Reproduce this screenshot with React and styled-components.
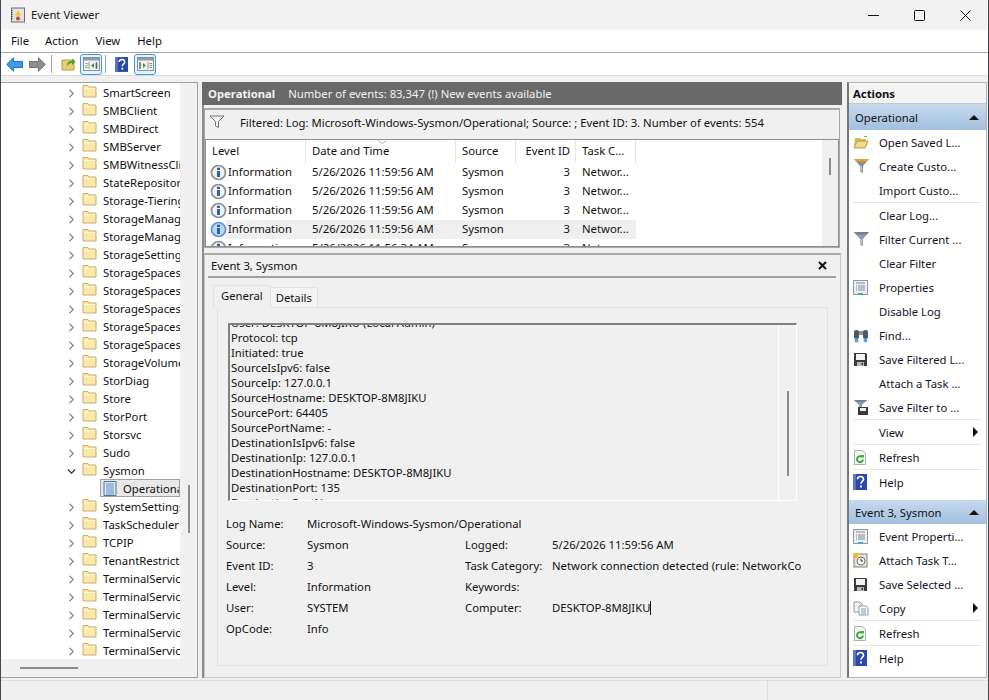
import React from "react";
import styled, { createGlobalStyle } from "styled-components";

const Global = createGlobalStyle`
  html, body { margin: 0; padding: 0; background: #f0f0f0; overflow: hidden; }
  * { box-sizing: border-box; }
  body { font-family: "Noto Sans", "Open Sans", "Liberation Sans", sans-serif; font-size: 11.3px; color: #111; }
  svg { flex: none; display: block; }
`;

const Win = styled.div`
  width: 989px; height: 700px; display: flex; flex-direction: column;
  border-left: 1px solid #3c4a55; border-right: 1px solid #3c4a55; background: #f0f0f0; overflow: hidden;
`;
const TitleBar = styled.div`height: 30px; background: #f2f2f2; display: flex; align-items: center; padding-left: 9px; flex: none;`;
const TitleText = styled.span`flex: 1; color: #1a1a1a; margin-left: 5px; padding-bottom: 2px;`;
const WinBtn = styled.div`width: 46px; height: 30px; display: flex; align-items: center; justify-content: center;`;
const MenuBar = styled.div`height: 23px; background: #fff; border-bottom: 1px solid #a6a6a6; display: flex; align-items: center; padding: 0 0 2px 10px; flex: none;`;
const MenuItem = styled.span`margin-right: ${p => p.$mr}px;`;
const ToolBar = styled.div`height: 23px; background: #fff; border-bottom: 1px solid #dcdcdc; display: flex; align-items: center; padding-left: 5px; flex: none;`;
const ToolBtn = styled.div`width: ${p => p.$w || 23}px; height: 21px; display: flex; align-items: center; justify-content: center; margin-left: ${p => p.$ml || 0}px;
  ${p => p.$on && "background:#e5f3ff;border:1px solid #3f9be3;border-radius:3px;"}`;
const ToolSep = styled.div`width: 1px; height: 18px; background: #a0a0a0; margin: 0 ${p => p.$r}px 0 ${p => p.$l}px;`;
const Main = styled.div`flex: 1; display: grid; grid-template-columns: 197px 643px 140px; column-gap: 3px; padding: 6px 0 2px 0; min-height: 0;`;

const TreePane = styled.div`display: grid; grid-template-rows: 1fr 18px; grid-template-columns: 1fr 17px; border: 1px solid #a0a0a0; border-left: 0; background: #f0f0f0; min-height: 0; overflow: hidden;`;
const TreeList = styled.div`background: #fff; overflow: hidden; min-height: 0;`;
const TreeRow = styled.div`height: 18px; display: flex; align-items: center; white-space: nowrap; overflow: hidden; padding-left: ${p => p.$leaf ? 99 : 66}px;`;
const TreeLabel = styled.span`margin-left: 6px; overflow: hidden; flex: 1;`;
const LeafBox = styled.div`display: flex; align-items: center; height: 18px; background: #e8e8e8; border: 1px solid #a0a0a0; flex: 1; overflow: hidden; padding-left: 2px; gap: 6px; color: #111;`;
const VTrack = styled.div`display: flex; flex-direction: column; align-items: center; padding-top: ${p => p.$top}px; background: #f0f0f0;`;
const VThumb = styled.div`width: 2px; height: ${p => p.$h}px; background: #8c8c8c; flex: none;`;
const HTrack = styled.div`background: #f0f0f0; grid-column: 1 / 3; padding: 8px 0 0 19px;`;
const HThumb = styled.div`width: 58px; height: 2px; background: #8c8c8c;`;

const Center = styled.div`display: flex; flex-direction: column; min-height: 0; margin-left: 1px;`;
const DarkHead = styled.div`height: 23px; background: #696969; color: #f2f2f2; display: flex; align-items: center; padding: 0 0 1px 6px; gap: 13px; flex: none; margin-right: 2px;`;
const Bold = styled.b`font-weight: 700;`;
const PaneStack = styled.div`flex: 1; border-left: 2px solid #8c8c8c; display: flex; flex-direction: column; min-height: 0;`;
const UpperPane = styled.div`height: 140px; margin-top: 3px; margin-right: 4px; border: 1px solid #a8a8a8; border-top-width: 2px; background: #f0f0f0; flex: none; display: flex; flex-direction: column;`;
const FilterBar = styled.div`height: 29px; display: flex; align-items: center; padding: 0 0 5px 4px; gap: 15px; flex: none;`;
const Grid = styled.div`flex: 1; background: #fff; border: 1px solid #8f8f8f; display: grid; grid-template-columns: 1fr 16px; overflow: hidden; min-height: 0;`;
const GridBody = styled.div`overflow: hidden;`;
const Row = styled.div`display: grid; grid-template-columns: 100px 150px 60px 60px 60px; height: ${p => p.$h || 19}px; align-items: center; position: relative; width: 430px;`;
const HeadCell = styled.div`height: 23px; display: flex; align-items: center; padding: 0 0 3px 6px; border-right: 1px solid #e6e6e6; ${p => p.$r && "justify-content:flex-end;padding-right:5px;padding-left:0;"}`;
const SortMark = styled.svg`position: absolute; left: 172px; top: 0;`;
const Cell = styled.div`padding-left: 6px; white-space: nowrap; height: 19px; line-height: 18px; overflow: hidden;
  ${p => p.$r && "text-align:right;padding-right:6px;padding-left:0;"}
  ${p => p.$sel && "background:#efefef;"}
  ${p => p.$lvl && "padding-left:2px;margin-left:20px;"}`;
const IconSlot = styled.div`position: absolute; left: 4px; top: 1px; width: 17px; height: 17px;`;

const Lower = styled.div`flex: 1; margin-top: 5px; margin-right: 3px; border: 1px solid #c8c8c8; border-top: 2px solid #a8a8a8; padding: 0 4px 0 3px; display: flex; flex-direction: column; min-height: 0;`;
const LowerHead = styled.div`height: 23px; border-bottom: 2px solid #a0a0a0; display: flex; align-items: center; justify-content: space-between; padding: 0 9px 0 3px; flex: none;`;
const Tabs = styled.div`display: flex; align-items: flex-end; height: 29px; padding-left: 5px; flex: none;`;
const Tab = styled.div`height: ${p => p.$on ? 23 : 20}px; padding: 0 ${p => p.$on ? 7 : 5}px ${p => p.$on ? 4 : 0}px; display: flex; align-items: center; background: ${p => p.$on ? "#f0f0f0" : "#f4f4f4"}; border: 1px solid #e2e2e2; border-bottom: 0;
  ${p => p.$on ? "position:relative;margin-bottom:-1px;" : "margin-left:-1px;"}`;
const TabBody = styled.div`flex: 1; margin: 0 8px 11px 9px; border: 1px solid #e2e2e2; padding: 15px 0 0 10px; display: flex; flex-direction: column; min-height: 0;`;
const XmlBox = styled.div`height: 178px; width: 569px; border-style: solid; border-width: 2px 1px 1px 2px; border-color: #808080 #fff #fff #808080; display: grid; grid-template-columns: 1fr 18px; overflow: hidden; flex: none;`;
const XmlText = styled.div`overflow: hidden; padding-left: 1px; line-height: 15px; margin-top: -10px; white-space: nowrap;`;
const XmlTrack = styled.div`border-left: 1px solid #fff; display: flex; justify-content: center; padding-top: 66px;`;
const Details = styled.div`display: grid; grid-template-columns: 81px 158px 87px 1fr; grid-auto-rows: 21px; margin: 12px 0 0 -2px; align-items: center; white-space: nowrap;`;
const WideCell = styled.span`grid-column: 2 / 5;`;
const Caret = styled.span`display: inline-block; width: 1px; height: 14px; background: #111; vertical-align: middle;`;

const Actions = styled.div`display: flex; flex-direction: column; border: 1px solid #b4b4b4; border-left: 2px solid #777; background: #fff; min-height: 0; overflow: hidden;`;
const ActionsHead = styled.div`height: 21px; background: #f4f4f4; border-bottom: 1px solid #c8c8c8; font-weight: 700; display: flex; align-items: center; padding-left: 4px; flex: none;`;
const SecHead = styled.div`height: ${p => p.$h}px; background: linear-gradient(#c6daef, #a2bfde); display: flex; align-items: center; justify-content: space-between; padding: 0 7px 0 6px; flex: none;`;
const Item = styled.div`height: 24px; display: flex; align-items: center; padding: 0 8px 0 4px; gap: 8px; white-space: nowrap; flex: none; color: #14142a;`;
const ItemIcon = styled.div`width: 18px; height: 18px; display: flex; align-items: center; justify-content: flex-start; flex: none;`;
const ItemText = styled.span`flex: 1;`;
const ItemSep = styled.div`height: 1px; background: #e6e6e6; margin: 0 5px 0 4px; flex: none;`;
const SecGap = styled.div`height: ${p => p.$h}px; flex: none;`;
const Tri = styled.div`width: 0; height: 0; border-left: 5px solid transparent; border-right: 5px solid transparent; border-bottom: 5px solid #111;`;
const TriR = styled.div`width: 0; height: 0; border-top: 5px solid transparent; border-bottom: 5px solid transparent; border-left: 5px solid #111;`;
const Status = styled.div`height: 20px; flex: none; display: flex; background: #f0f0f0; border-top: 1px solid #dcdcdc; justify-content: flex-end;`;
const StatusCell = styled.div`width: 221px; border-left: 1px solid #dcdcdc;`;

const Folder = () => (
  <svg width="15" height="14" viewBox="0 0 15 14" style={{ marginTop: -2 }}>
    <path d="M1 1.500h5l1 1.500h7v10H1z" fill="#fbe8ad" stroke="#c8ad6c" />
    <path d="M2 4.500h11" stroke="#fff6d6" />
  </svg>
);
const Chev = ({ open }) => (
  <svg width="9" height="9" viewBox="0 0 9 9" style={{ marginRight: 6, marginTop: 2 }}>
    {open ? <path d="M.8 2.500 4.500 6.200 8.200 2.500" fill="none" stroke="#333" strokeWidth="1.3" /> : <path d="M2.500 .8 6.200 4.500 2.500 8.200" fill="none" stroke="#8a8a8a" strokeWidth="1.3" />}
  </svg>
);
const InfoI = ({ sel }) => (
  <svg width="17" height="17" viewBox="0 0 17 17">
    <circle cx="8.500" cy="8.500" r="7" fill={sel ? "#bcd6f4" : "#f1f4fa"} stroke={sel ? "#5f93d3" : "#8e8e8e"} strokeWidth="1.7" />
    <rect x="7" y="7" width="3" height="6" fill="#2a62b0" /><rect x="7" y="3.700" width="3" height="2.300" fill="#2a62b0" />
  </svg>
);
const FunnelG = ({ c = "#8aa0b5", t = "#6f8296", w = 17 }) => (
  <svg width={w} height="16" viewBox="0 0 17 16"><path d="M1 1h15L10 8v7l-3-1.500V8z" fill={c} /><path d="M1 1h15l-2 2.500H3z" fill={t} /><path d="M8 8v5" stroke="#dfe6ec" /></svg>
);
const FilterSave = () => (
  <svg width="17" height="16" viewBox="0 0 17 16"><path d="M1 1h13L9 6v3H6V6z" fill="#8aa0b5" /><path d="M1 1h13l-2 2H3z" fill="#6f8296" /><path d="M5 8h10v8H5z" fill="#3a3a3a" /><rect x="7" y="9" width="6" height="3" fill="#eee" /></svg>
);
const Disk = () => (
  <svg width="15" height="15" viewBox="0 0 15 15"><path d="M1 1h12l1 1v12H1z" fill="#3a3a3a" /><rect x="3" y="2" width="9" height="6" fill="#f2f2f2" /><rect x="4" y="10" width="7" height="4" fill="#b8b8b8" /><rect x="8.500" y="10.700" width="1.500" height="2.500" fill="#3a3a3a" /></svg>
);
const Props = () => (
  <svg width="15" height="15" viewBox="0 0 15 15"><rect x=".5" y=".5" width="14" height="14" fill="#eef1f4" stroke="#8f98a2" /><path d="M3 3h9M5 6h7M5 8h7M5 10h7" stroke="#7f8a95" /><path d="M3 6h1M3 8h1M3 10h1" stroke="#7f8a95" /><rect x="5" y="13" width="5" height="1.500" fill="#2fa9e0" /></svg>
);
const Refresh = () => (
  <svg width="14" height="15" viewBox="0 0 14 15"><path d="M1.500.5h8l3 3v11h-11z" fill="#f5f5f5" stroke="#b0b0b0" /><path d="M10 9.500a3 3 0 1 1-1-2.600" fill="none" stroke="#39a83a" strokeWidth="2" /><path d="M7.500 5 11 5 10.500 8.500z" fill="#39a83a" /></svg>
);
const HelpI = ({ s = 14 }) => (
  <svg width={s} height={s + 2} viewBox="0 0 14 16"><rect width="14" height="16" fill="#2c49a8" /><rect width="3" height="16" fill="#5b74c6" /><path d="M4.500 5.200c0-3.600 6-3.600 6 0 0 2.300-2.600 2.200-2.600 4.600" fill="none" stroke="#fff" strokeWidth="1.600" /><rect x="7" y="11.500" width="1.900" height="2" fill="#fff" /></svg>
);
const PaneBtn = ({ right }) => (
  <svg width="17" height="14" viewBox="0 0 17 14"><rect x=".5" y=".5" width="16" height="13" fill="#f2f2f2" stroke="#8e8e8e" /><rect x="1" y="1" width="15" height="2.500" fill="#8e9aa6" />
    <path d={right ? "M11 5v7" : "M6 5v7"} stroke="#9a9a9a" />
    <path d={right ? "M6 6 9 8.500 6 11z" : "M11 6 8 8.500 11 11z"} fill="#2f9e48" />
    <path d={right ? "M2.500 5.500v6h1v-6zM12.500 6.500h2.500M12.500 8.500h2.500M12.500 10.500h2.500" : "M2.500 6.500h2M2.500 8.500h2M2.500 10.500h2M13 5.500v6h1v-6z"} stroke="#7f8a95" />
  </svg>
);
const Arrow = ({ left, c, e }) => (
  <svg width="17" height="15" viewBox="0 0 17 15"><path d={left ? "M.7 7.500 7.500.8v3.700h9v6h-9v3.700z" : "M16.300 7.500 9.500.8v3.700h-9v6h9v3.700z"} fill={c} stroke={e} /></svg>
);
const Log = () => (
  <svg width="14" height="15" viewBox="0 0 14 15"><path d="M1 .5h12v14H1z" fill="#dbe8f6" stroke="#55718f" /><path d="M3 3h8M3 5h8M3 7h8M3 9h8M3 11h8M3 13h8" stroke="#5b8fc9" /></svg>
);

const tree = ["SmartScreen","SMBClient","SMBDirect","SMBServer","SMBWitnessClient","StateRepository","Storage-Tiering","StorageManagement","StorageManagement","StorageSettings","StorageSpaces","StorageSpaces","StorageSpaces","StorageSpaces","StorageSpaces","StorageVolume","StorDiag","Store","StorPort","Storsvc","Sudo"];
const tree2 = ["SystemSettings","TaskScheduler","TCPIP","TenantRestrictions","TerminalServices","TerminalServices","TerminalServices","TerminalServices","TerminalServices"];

const rows = [0, 1, 2, 3];
const xml = ["Protocol: tcp","Initiated: true","SourceIsIpv6: false","SourceIp: 127.0.0.1","SourceHostname: DESKTOP-8M8JIKU","SourcePort: 64405","SourcePortName: -","DestinationIsIpv6: false","DestinationIp: 127.0.0.1","DestinationHostname: DESKTOP-8M8JIKU","DestinationPort: 135"];

const Act = ({ icon, text, arrow }) => (
  <Item><ItemIcon>{icon}</ItemIcon><ItemText>{text}</ItemText>{arrow && <TriR />}</Item>
);

export default function App() {
  return (
    <Win>
      <Global />
      <TitleBar>
        <svg width="16" height="16" viewBox="0 0 16 16"><rect x="1.500" y="1" width="13" height="14" fill="#e7e2d8" stroke="#6b6b7a" /><path d="M2 3v10" stroke="#333" strokeDasharray="1 1" /><path d="M8 3.500 11 8.500H5z" fill="#f3c331" /><circle cx="8" cy="11.500" r="2" fill="#c8413a" /></svg>
        <TitleText>Event Viewer</TitleText>
        <WinBtn><svg width="11" height="11"><path d="M0 5.500h11" stroke="#111" /></svg></WinBtn>
        <WinBtn><svg width="11" height="11"><rect x=".5" y=".5" width="10" height="10" rx="1" fill="none" stroke="#111" /></svg></WinBtn>
        <WinBtn><svg width="11" height="11"><path d="M.5.5l10 10M10.500.5l-10 10" stroke="#111" /></svg></WinBtn>
      </TitleBar>
      <MenuBar><MenuItem $mr={16}>File</MenuItem><MenuItem $mr={17}>Action</MenuItem><MenuItem $mr={17}>View</MenuItem><MenuItem $mr={0}>Help</MenuItem></MenuBar>
      <ToolBar>
        <Arrow left c="#3d9be9" e="#1e76c8" /><ToolBtn $w={6} /><Arrow c="#8d8d8d" e="#777" />
        <ToolSep $l={5} $r={5} />
        <ToolBtn><svg width="15" height="14" viewBox="0 0 15 14"><path d="M1 3h12v10H1z" fill="#e9cf6f" stroke="#b09a4a" /><path d="M6 10c0-4 1-6 5-6V1.500L14.500 5 11 8V6c-2 0-4 1-5 4z" fill="#4aa03f" /></svg></ToolBtn>
        <ToolBtn $on $w={22}><PaneBtn /></ToolBtn>
        <ToolSep $l={3} $r={4} />
        <ToolBtn><HelpI s={13} /></ToolBtn>
        <ToolBtn $on $w={22} $ml={1}><PaneBtn right /></ToolBtn>
      </ToolBar>
      <Main>
        <TreePane>
          <TreeList>
            {tree.map((t, i) => <TreeRow key={i}><Chev /><Folder /><TreeLabel>{t}</TreeLabel></TreeRow>)}
            <TreeRow><Chev open /><Folder /><TreeLabel>Sysmon</TreeLabel></TreeRow>
            <TreeRow $leaf><LeafBox><Log />Operational</LeafBox></TreeRow>
            {tree2.map((t, i) => <TreeRow key={i}><Chev /><Folder /><TreeLabel>{t}</TreeLabel></TreeRow>)}
          </TreeList>
          <VTrack $top={402}><VThumb $h={48} /></VTrack>
          <HTrack><HThumb /></HTrack>
        </TreePane>
        <Center>
          <DarkHead><Bold>Operational</Bold><span>Number of events: 83,347 (!) New events available</span></DarkHead>
          <PaneStack>
            <UpperPane>
              <FilterBar>
                <svg width="16" height="14" viewBox="0 0 16 14"><path d="M1 1h14L9.500 6.500v6L6.500 11V6.500z" fill="#f4f4f4" stroke="#707070" /></svg>
                <span>Filtered: Log: Microsoft-Windows-Sysmon/Operational; Source: ; Event ID: 3. Number of events: 554</span>
              </FilterBar>
              <Grid>
                <GridBody>
                  <Row $h={23}>
                    <HeadCell>Level</HeadCell><HeadCell>Date and Time</HeadCell><HeadCell>Source</HeadCell><HeadCell $r>Event ID</HeadCell><HeadCell>Task C...</HeadCell>
                    <SortMark width="9" height="4" viewBox="0 0 9 4"><path d="M.5.5 4.500 3.500 8.500.5" fill="none" stroke="#aaa" /></SortMark>
                  </Row>
                  {rows.map(i => (
                    <Row key={i}>
                      <IconSlot><InfoI sel={i === 3} /></IconSlot>
                      <Cell $lvl $sel={i === 3}>Information</Cell>
                      <Cell $sel={i === 3}>5/26/2026 11:59:56 AM</Cell>
                      <Cell $sel={i === 3}>Sysmon</Cell>
                      <Cell $r $sel={i === 3}>3</Cell>
                      <Cell $sel={i === 3}>Networ...</Cell>
                    </Row>
                  ))}
                  <Row>
                    <IconSlot><InfoI /></IconSlot>
                    <Cell $lvl>Information</Cell><Cell>5/26/2026 11:56:34 AM</Cell><Cell>Sysmon</Cell><Cell $r>3</Cell><Cell>Networ...</Cell>
                  </Row>
                </GridBody>
                <VTrack $top={18}><VThumb $h={17} /></VTrack>
              </Grid>
            </UpperPane>
            <Lower>
              <LowerHead><span>Event 3, Sysmon</span>
                <svg width="9" height="9" viewBox="0 0 9 9"><path d="M1 1l7 7M8 1 1 8" stroke="#111" strokeWidth="2" /></svg>
              </LowerHead>
              <Tabs><Tab $on>General</Tab><Tab>Details</Tab></Tabs>
              <TabBody>
                <XmlBox>
                  <XmlText>
                    <div>User: DESKTOP-8M8JIKU (Local Admin)</div>
                    {xml.map(x => <div key={x}>{x}</div>)}
                    <div>DestinationPortName: -</div>
                  </XmlText>
                  <XmlTrack><VThumb $h={85} /></XmlTrack>
                </XmlBox>
                <Details>
                  <span>Log Name:</span><WideCell>Microsoft-Windows-Sysmon/Operational</WideCell>
                  <span>Source:</span><span>Sysmon</span><span>Logged:</span><span>5/26/2026 11:59:56 AM</span>
                  <span>Event ID:</span><span>3</span><span>Task Category:</span><span>Network connection detected (rule: NetworkCo</span>
                  <span>Level:</span><span>Information</span><span>Keywords:</span><span />
                  <span>User:</span><span>SYSTEM</span><span>Computer:</span><span>DESKTOP-8M8JIKU<Caret /></span>
                  <span>OpCode:</span><span>Info</span><span /><span />
                </Details>
              </TabBody>
            </Lower>
          </PaneStack>
        </Center>
        <Actions>
          <ActionsHead>Actions</ActionsHead>
          <SecHead $h={26}>Operational<Tri /></SecHead>
          <Act icon={<svg width="16" height="13" viewBox="0 0 16 13"><path d="M2 2h5l1 1h5v2H4L1 12z" fill="#d9b65a" /><path d="M4 5h11l-3 7H1z" fill="#f0d98a" stroke="#b79a4a" /><path d="M11 .5h3" stroke="#5fc45f" /></svg>} text="Open Saved L..." />
          <Act icon={<FunnelG c="#8a9099" t="#f0a020" />} text="Create Custo..." />
          <Act text="Import Custo..." />
          <ItemSep />
          <Act text="Clear Log..." />
          <Act icon={<FunnelG />} text="Filter Current ..." />
          <Act text="Clear Filter" />
          <Act icon={<Props />} text="Properties" />
          <Act text="Disable Log" />
          <Act icon={<svg width="16" height="15" viewBox="0 0 16 15"><rect x="1" y="2" width="5" height="9" rx="2" fill="#4d5a66" /><rect x="10" y="2" width="5" height="9" rx="2" fill="#4d5a66" /><rect x="6" y="3" width="4" height="4" fill="#8c96a0" /><circle cx="3.500" cy="12.500" r="2" fill="#4fa3e6" /><circle cx="12.500" cy="12.500" r="2" fill="#4fa3e6" /></svg>} text="Find..." />
          <Act icon={<Disk />} text="Save Filtered L..." />
          <Act text="Attach a Task ..." />
          <Act icon={<FilterSave />} text="Save Filter to ..." />
          <ItemSep />
          <Act text="View" arrow />
          <ItemSep />
          <Act icon={<Refresh />} text="Refresh" />
          <ItemSep />
          <Act icon={<HelpI />} text="Help" />
          <SecGap $h={6} />
          <SecHead $h={24}>Event 3, Sysmon<Tri /></SecHead>
          <Act icon={<Props />} text="Event Properti..." />
          <Act icon={<svg width="15" height="15" viewBox="0 0 15 15"><rect x="1" y="1" width="13" height="13" fill="#e9e4da" stroke="#8a8378" /><circle cx="8" cy="8" r="4" fill="#fff" stroke="#6f6f6f" /><path d="M8 5.500V8h2" stroke="#333" fill="none" /><circle cx="2.500" cy="2.500" r="2.500" fill="#f4b728" /></svg>} text="Attach Task T..." />
          <Act icon={<Disk />} text="Save Selected ..." />
          <Act icon={<svg width="16" height="15" viewBox="0 0 16 15"><path d="M1 1h6l2 2v8H1z" fill="#f4f4f4" stroke="#8f98a2" /><path d="M6 5h7l2 2v7H6z" fill="#fff" stroke="#8f98a2" /><path d="M8 8h5M8 10h5M8 12h5" stroke="#6d9ac9" /></svg>} text="Copy" arrow />
          <ItemSep />
          <Act icon={<Refresh />} text="Refresh" />
          <ItemSep />
          <Act icon={<HelpI />} text="Help" />
        </Actions>
      </Main>
      <Status><StatusCell /></Status>
    </Win>
  );
}
